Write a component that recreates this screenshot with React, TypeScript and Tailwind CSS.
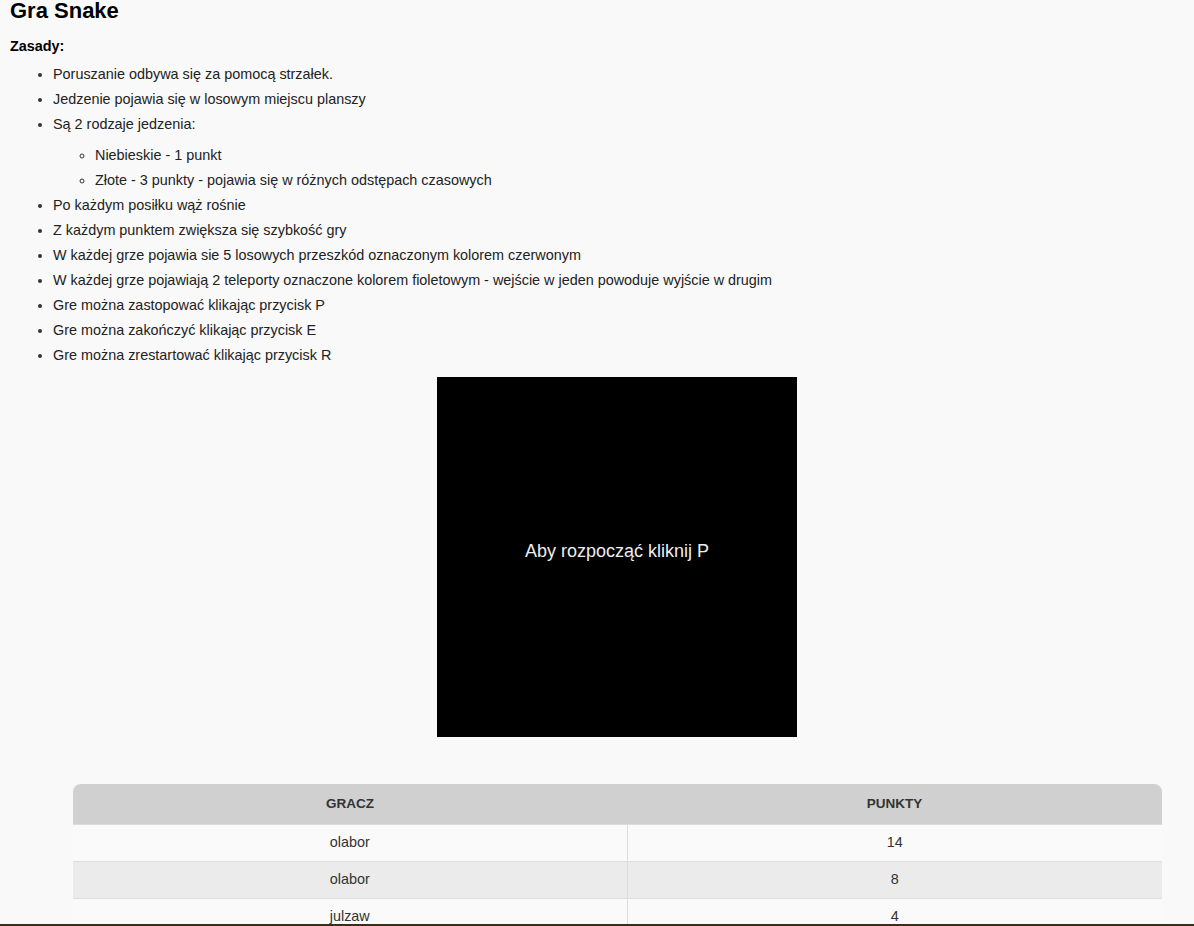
import React from "react";

const rules: (string | { text: string; sub: string[] })[] = [
  "Poruszanie odbywa się za pomocą strzałek.",
  "Jedzenie pojawia się w losowym miejscu planszy",
  { text: "Są 2 rodzaje jedzenia:", sub: ["Niebieskie - 1 punkt", "Złote - 3 punkty - pojawia się w różnych odstępach czasowych"] },
  "Po każdym posiłku wąż rośnie",
  "Z każdym punktem zwiększa się szybkość gry",
  "W każdej grze pojawia sie 5 losowych przeszkód oznaczonym kolorem czerwonym",
  "W każdej grze pojawiają 2 teleporty oznaczone kolorem fioletowym - wejście w jeden powoduje wyjście w drugim",
  "Gre można zastopować klikając przycisk P",
  "Gre można zakończyć klikając przycisk E",
  "Gre można zrestartować klikając przycisk R",
];

const scores = [
  { player: "olabor", points: 14 },
  { player: "olabor", points: 8 },
  { player: "julzaw", points: 4 },
  { player: "julzaw", points: 3 },
];

export default function App() {
  return (
    <div className="min-h-screen bg-[#f9f9f9] text-[#222] font-['Liberation_Sans',Arial,sans-serif] pb-10">
      <div className="px-[10px]">
        <h1 className="text-[22px] leading-[22px] font-bold text-black">Gra Snake</h1>
        <p className="mt-[12px] text-[14.4px] leading-[25px] font-bold text-black">Zasady:</p>
        <ul className="mt-[3px] pl-[43px] list-disc text-[14.4px] leading-[25px] marker:text-[#333]">
          {rules.map((r, i) =>
            typeof r === "string" ? (
              <li key={i}>{r}</li>
            ) : (
              <li key={i}>
                {r.text}
                <ul className="mt-[6px] pl-[42px] list-[circle]">
                  {r.sub.map((s) => (
                    <li key={s}>{s}</li>
                  ))}
                </ul>
              </li>
            )
          )}
        </ul>
      </div>

      <div className="ml-[40px] flex flex-col items-center">
        <div className="mt-[9px] w-[360px] h-[360px] bg-black flex items-center justify-center">
          <span className="text-[18px] text-[#eeeeee] -mt-[12px]">Aby rozpocząć kliknij P</span>
        </div>

        <table className="mt-[47px] w-[1089px] border-collapse text-[14.4px] text-[#333]">
          <thead>
            <tr className="bg-[#d0d0d0] h-[40px]">
              <th className="w-[555px] rounded-tl-[8px] font-bold text-[13.5px] uppercase">Gracz</th>
              <th className="rounded-tr-[8px] font-bold text-[13.5px] uppercase">Punkty</th>
            </tr>
          </thead>
          <tbody>
            {scores.map((s, i) => (
              <tr key={i} className={`h-[37px] border-t border-[#dddddd] ${i % 2 === 1 ? "bg-[#ebebeb]" : "bg-[#fafafa]"}`}>
                <td className="text-center border-r border-[#dddddd]">{s.player}</td>
                <td className="text-center">{s.points}</td>
              </tr>
            ))}
          </tbody>
        </table>
      </div>

      <div className="fixed left-0 right-0 bottom-0 h-[2px] bg-[#3a2e16]" />
    </div>
  );
}
